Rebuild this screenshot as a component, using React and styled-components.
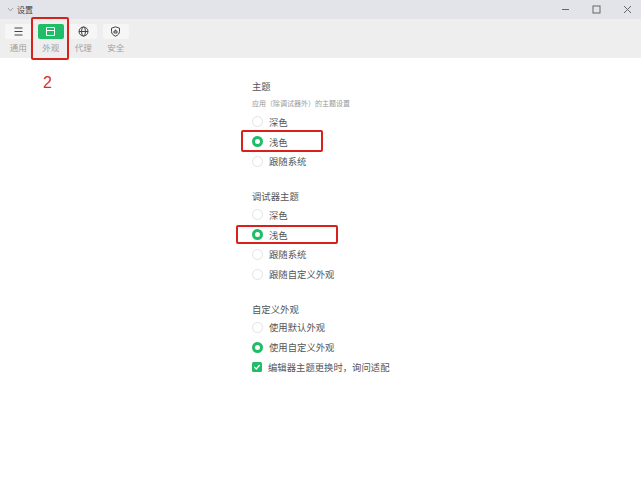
import React from 'react';
import styled, { createGlobalStyle } from 'styled-components';

const Global = createGlobalStyle`
  html, body { margin: 0; padding: 0; background: #fff; }
  body { font-family: "Noto Sans CJK SC", "Liberation Sans", sans-serif; }
`;

const Page = styled.div`
  position: relative;
  width: 641px;
  height: 500px;
  overflow: hidden;
  background: #fff;
`;

const TitleBar = styled.div`
  height: 19px;
  background: #e3e4e9;
  display: flex;
  align-items: center;
  padding-left: 7px;
  gap: 3px;
  font-size: 8px;
  color: #444;
`;

const WindowButtons = styled.div`
  margin-left: auto;
  margin-right: -2px;
  display: flex;
  align-items: center;
  color: #666;
`;

const WindowButton = styled.div`
  width: 31px;
  height: 19px;
  display: flex;
  align-items: center;
  justify-content: center;
`;

const Toolbar = styled.div`
  height: 39px;
  background: #eeeeee;
  display: flex;
  padding: 5px 0 0 5px;
  box-sizing: border-box;
  gap: 6px;
`;

const Tab = styled.div`
  width: 26.5px;
  display: flex;
  flex-direction: column;
  align-items: center;
  gap: 2px;
  font-size: 8.5px;
  line-height: 12px;
  color: #a0a0a0;
`;

const TabIcon = styled.div`
  width: 100%;
  height: 15px;
  border-radius: 2px;
  display: flex;
  align-items: center;
  justify-content: center;
  background: ${p => (p.$active ? '#1fbd68' : '#f6f6f6')};
  color: ${p => (p.$active ? '#fff' : '#444')};
`;

const Content = styled.div`
  padding: 20px 0 0 252px;
  display: flex;
  flex-direction: column;
  gap: 16.5px;
`;

const Group = styled.div`
  display: flex;
  flex-direction: column;
`;

const Heading = styled.div`
  font-size: 9.35px;
  line-height: 17px;
  color: #555;
`;

const Hint = styled.div`
  font-size: 7px;
  line-height: 17px;
  color: #999;
`;

const Row = styled.div`
  height: 19.8px;
  display: flex;
  align-items: center;
  gap: ${p => (p.$check ? '5px' : '6px')};
  font-size: 9.35px;
  color: #555;
`;

const Radio = styled.span`
  width: 11px;
  height: 11px;
  box-sizing: border-box;
  border-radius: 50%;
  flex: none;
  background: #fff;
  border: ${p => (p.$on ? '3px solid #1fbd68' : '1px solid #e2e2e2')};
`;

const Check = styled.span`
  width: 10px;
  height: 10px;
  margin-right: 1px;
  border-radius: 1.5px;
  flex: none;
  background: #1fbd68;
  display: flex;
  align-items: center;
  justify-content: center;
`;

const Highlight = styled.div`
  position: absolute;
  box-sizing: border-box;
  border: 2px solid #d9211c;
  border-radius: 2px;
  left: ${p => p.$x}px;
  top: ${p => p.$y}px;
  width: ${p => p.$w}px;
  height: ${p => p.$h}px;
`;

const StepNumber = styled.div`
  position: absolute;
  left: 43px;
  top: 74px;
  font-family: "Liberation Sans", sans-serif;
  font-size: 16px;
  line-height: 18px;
  color: #d9301f;
`;

const tabs = [
  {
    label: '通用',
    icon: <path d="M2.5 3h8M2.5 6.5h8M2.5 10h8" />,
  },
  {
    label: '外观',
    active: true,
    icon: <path d="M2.5 2.5h8v8h-8zM2.5 5.5h8" />,
  },
  {
    label: '代理',
    icon: (
      <>
        <circle cx="6.5" cy="6.5" r="4.5" />
        <ellipse cx="6.5" cy="6.5" rx="2" ry="4.5" />
        <path d="M2 6.5h9" />
      </>
    ),
  },
  {
    label: '安全',
    icon: (
      <>
        <path d="M6.5 1.8l4 1.4v3.2c0 2.3-1.7 3.9-4 4.8-2.3-.9-4-2.5-4-4.8V3.2z" />
        <path d="M5 6h3v2H5zM6.5 4.6V6" />
      </>
    ),
  },
];

const groups = [
  {
    title: '主题',
    hint: '应用（除调试器外）的主题设置',
    options: [['深色'], ['浅色', true], ['跟随系统']],
  },
  {
    title: '调试器主题',
    options: [['深色'], ['浅色', true], ['跟随系统'], ['跟随自定义外观']],
  },
  {
    title: '自定义外观',
    options: [['使用默认外观'], ['使用自定义外观', true]],
    check: '编辑器主题更换时，询问适配',
  },
];

export default function App() {
  return (
    <Page>
      <Global />
      <TitleBar>
        <svg width="7" height="7" viewBox="0 0 7 7" fill="none" stroke="#9aa" strokeWidth="1">
          <path d="M1 2l2.5 3L6 2" />
        </svg>
        设置
        <WindowButtons>
          <WindowButton>
            <svg width="9" height="9" viewBox="0 0 9 9" stroke="currentColor" strokeWidth="1">
              <path d="M1 4.5h7" />
            </svg>
          </WindowButton>
          <WindowButton>
            <svg width="9" height="9" viewBox="0 0 9 9" fill="none" stroke="currentColor" strokeWidth="1">
              <rect x="1" y="1" width="7" height="7" />
            </svg>
          </WindowButton>
          <WindowButton>
            <svg width="9" height="9" viewBox="0 0 9 9" stroke="currentColor" strokeWidth="1">
              <path d="M1 1l7 7M8 1L1 8" />
            </svg>
          </WindowButton>
        </WindowButtons>
      </TitleBar>
      <Toolbar>
        {tabs.map(t => (
          <Tab key={t.label}>
            <TabIcon $active={t.active}>
              <svg width="13" height="13" viewBox="0 0 13 13" fill="none" stroke="currentColor" strokeWidth="1">
                {t.icon}
              </svg>
            </TabIcon>
            {t.label}
          </Tab>
        ))}
      </Toolbar>
      <Content>
        {groups.map(g => (
          <Group key={g.title}>
            <Heading>{g.title}</Heading>
            {g.hint && <Hint>{g.hint}</Hint>}
            {g.options.map(([text, on]) => (
              <Row key={text}>
                <Radio $on={on} />
                {text}
              </Row>
            ))}
            {g.check && (
              <Row $check>
                <Check>
                  <svg width="8" height="8" viewBox="0 0 8 8" fill="none" stroke="#fff" strokeWidth="1.2">
                    <path d="M1.3 4l2 2 3.4-4" />
                  </svg>
                </Check>
                {g.check}
              </Row>
            )}
          </Group>
        ))}
      </Content>
      <Highlight $x={31} $y={17} $w={38} $h={43} />
      <StepNumber>2</StepNumber>
      <Highlight $x={241} $y={130} $w={82} $h={22} />
      <Highlight $x={236} $y={225} $w={102} $h={19} />
    </Page>
  );
}
